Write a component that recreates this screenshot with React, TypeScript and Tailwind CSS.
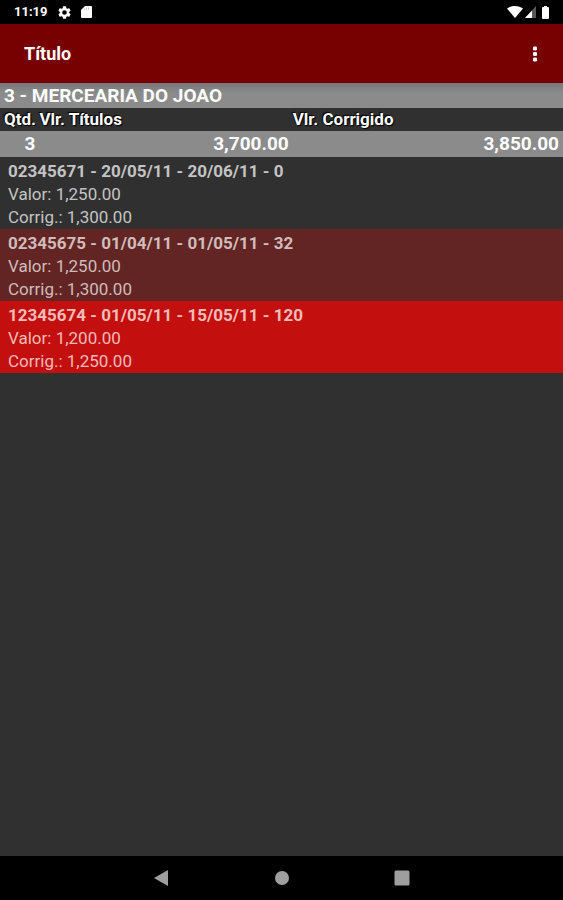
const CUSTOMER = "3 - MERCEARIA DO JOAO";

const TOTALS = { count: "3", value: "3,700.00", corrected: "3,850.00" };

const TITLES = [
  {
    heading: "02345671 - 20/05/11 - 20/06/11 - 0",
    value: "1,250.00",
    corrected: "1,300.00",
    tone: "text-[#c4c4c4]",
  },
  {
    heading: "02345675 - 01/04/11 - 01/05/11 - 32",
    value: "1,250.00",
    corrected: "1,300.00",
    tone: "bg-[#622524] text-[#d0bcba]",
  },
  {
    heading: "12345674 - 01/05/11 - 15/05/11 - 120",
    value: "1,200.00",
    corrected: "1,250.00",
    tone: "bg-[#c30f0d] text-[#f0bcb8]",
  },
];

function StatusBar() {
  return (
    <div className="flex h-6 items-center justify-between bg-black pr-3.5 pl-3.5 text-white">
      <div className="flex items-center gap-2.5">
        <span className="text-[13px] font-bold">11:19</span>
        <svg viewBox="2 2 20 20" className="size-[13px]" fill="currentColor" aria-hidden>
          <path d="M19.14 12.94c.04-.3.06-.61.06-.94s-.02-.64-.07-.94l2.03-1.58a.5.5 0 0 0 .12-.61l-1.92-3.32a.49.49 0 0 0-.59-.22l-2.39.96a7 7 0 0 0-1.62-.94l-.36-2.54a.48.48 0 0 0-.48-.41h-3.84a.48.48 0 0 0-.47.41l-.36 2.54c-.59.24-1.13.57-1.62.94l-2.39-.96a.48.48 0 0 0-.59.22L2.74 8.870a.48.48 0 0 0 .12.61l2.03 1.58a6 6 0 0 0 0 1.88l-2.03 1.58a.5.5 0 0 0-.12.61l1.92 3.32c.12.22.37.29.59.22l2.39-.96c.5.38 1.03.7 1.62.94l.36 2.54c.05.24.24.41.48.41h3.84c.24 0 .44-.17.47-.41l.36-2.54a7 7 0 0 0 1.62-.94l2.39.96c.22.08.47 0 .59-.22l1.92-3.32a.47.47 0 0 0-.12-.61zM12 15.6a3.6 3.6 0 1 1 0-7.2 3.6 3.6 0 0 1 0 7.2z" />
        </svg>
        <svg viewBox="0 0 11 12" className="h-3 w-[11px]" fill="currentColor" aria-hidden>
          <path d="M4 0h6a1 1 0 0 1 1 1v10a1 1 0 0 1-1 1H1a1 1 0 0 1-1-1V4z" />
          <path d="M3.5 2.500v1.500M5.500 1.500v2M7.500 1.500v2" stroke="#aaa" strokeWidth="0.7" />
        </svg>
      </div>
      <div className="flex items-center">
        <svg viewBox="0 0 16 12" className="h-3 w-4" fill="currentColor" aria-hidden>
          <path d="M0 2.6C2.2.9 5 0 8 0s5.800.9 8 2.600L8 12z" />
        </svg>
        <svg viewBox="0 0 11 12" className="ml-0.5 h-3 w-[11px]" fill="currentColor" aria-hidden>
          <path d="M11 0v12H0z" opacity="0.35" />
          <path d="M7 4.400V12H0z" />
        </svg>
        <svg viewBox="0 0 7 13" className="ml-1.5 h-[13px] w-[7px]" fill="currentColor" aria-hidden>
          <path d="M2 0h3v1h1a1 1 0 0 1 1 1v10a1 1 0 0 1-1 1H1a1 1 0 0 1-1-1V2a1 1 0 0 1 1-1h1z" />
        </svg>
      </div>
    </div>
  );
}

function AppBar() {
  return (
    <header className="flex h-[59px] items-center justify-between bg-[#770000] pr-4 pl-6 text-white">
      <h1 className="text-lg font-bold">Título</h1>
      <button type="button" aria-label="Mais opções" className="p-2">
        <svg viewBox="0 0 8 16" className="h-4 w-2" fill="currentColor" aria-hidden>
          <rect x="2" y="0.5" width="4" height="4" rx="1.3" />
          <rect x="2" y="6" width="4" height="4" rx="1.3" />
          <rect x="2" y="11.500" width="4" height="4" rx="1.3" />
        </svg>
      </button>
    </header>
  );
}

function Summary() {
  return (
    <table className="w-full table-fixed text-left text-white">
      <thead>
        <tr className="h-[23px] text-[17px] leading-[23px] [text-shadow:1px_1px_1px_#000,-1px_-1px_1px_#000]">
          <th className="w-[7%] pl-1 font-bold">Qtd.</th>
          <th className="w-[45%] font-bold">Vlr. Títulos</th>
          <th className="font-bold">Vlr. Corrigido</th>
        </tr>
      </thead>
      <tbody>
        <tr className="h-[26px] bg-[#8b8b8b] text-right text-[19px] leading-[26px] font-bold">
          <td className="pr-1">{TOTALS.count}</td>
          <td className="pr-1">{TOTALS.value}</td>
          <td className="pr-1">{TOTALS.corrected}</td>
        </tr>
      </tbody>
    </table>
  );
}

function NavigationBar() {
  return (
    <nav aria-label="Sistema" className="flex h-11 items-center justify-center gap-[88px] bg-black text-[#9e9e9e]">
      <button type="button" aria-label="Voltar" className="p-2">
        <svg viewBox="0 0 16 16" className="size-4" fill="currentColor" aria-hidden>
          <path d="M14 0v16L0 8z" />
        </svg>
      </button>
      <button type="button" aria-label="Início" className="p-2">
        <svg viewBox="0 0 16 16" className="size-4" fill="currentColor" aria-hidden>
          <circle cx="8" cy="8" r="7" />
        </svg>
      </button>
      <button type="button" aria-label="Recentes" className="p-2">
        <svg viewBox="0 0 16 16" className="size-4" fill="currentColor" aria-hidden>
          <rect x="0.5" y="0.5" width="15" height="15" rx="1.5" />
        </svg>
      </button>
    </nav>
  );
}

export default function App() {
  return (
    <div className="flex min-h-screen flex-col bg-[#303030] font-[Roboto,sans-serif]">
      <StatusBar />
      <AppBar />
      <main className="flex-1">
        <h2 className="bg-linear-to-b from-[#777777] to-[#8b8b8b] to-40% pt-px pl-1 text-[19px] leading-6 font-bold text-white">
          {CUSTOMER}
        </h2>
        <Summary />
        <ul>
          {TITLES.map((title) => (
            <li key={title.heading} className={`px-2 pt-[3px] text-[17px] leading-[23px] ${title.tone}`}>
              <h3 className="font-bold">{title.heading}</h3>
              <p>Valor: {title.value}</p>
              <p>Corrig.: {title.corrected}</p>
            </li>
          ))}
        </ul>
      </main>
      <NavigationBar />
    </div>
  );
}
